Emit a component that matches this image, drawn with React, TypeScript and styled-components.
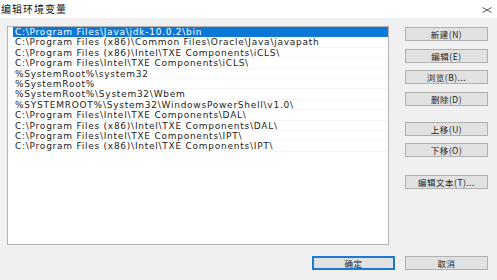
import React from 'react';
import styled, { createGlobalStyle } from 'styled-components';

const GlobalStyle = createGlobalStyle`
  html, body {
    margin: 0;
    padding: 0;
    background: #f0f0f0;
  }
`;

const Window = styled.div`
  width: 497px;
  height: 280px;
  display: flex;
  flex-direction: column;
  background: #f0f0f0;
  font-family: "Noto Sans CJK SC", "DejaVu Sans", sans-serif;
  overflow: hidden;
`;

const TitleBar = styled.div`
  height: 18px;
  background: #ffffff;
  display: flex;
  align-items: center;
  justify-content: space-between;
  padding: 0 5px 0 0;
  box-sizing: border-box;
`;

const Title = styled.span`
  font-size: 10px;
  color: #111;
  margin-left: 1px;
  margin-top: -2px;
  letter-spacing: 1px;
`;

const CloseIcon = styled.svg`
  width: 10px;
  height: 6px;
  margin-top: 1px;
`;

const Body = styled.div`
  display: flex;
  padding: 8px 0 0 7px;
`;

const ListBox = styled.div`
  width: 382px;
  height: 219px;
  box-sizing: border-box;
  border: 1px solid #b4b4b4;
  background: #ffffff;
  padding: 0 0 0 5px;
`;

const Row = styled.div<{ $selected?: boolean }>`
  height: 10.4px;
  line-height: 10.4px;
  padding-left: 2px;
  font-family: "DejaVu Sans", sans-serif;
  font-size: 9px;
  letter-spacing: 0.75px;
  white-space: nowrap;
  color: ${({ $selected }) => ($selected ? '#ffffff' : '#222')};
  background: ${({ $selected }) => ($selected ? '#0a78d6' : 'transparent')};
  box-shadow: inset 0 -1px 0 ${({ $selected }) => ($selected ? 'transparent' : '#f6f6f6')};
`;

const ButtonColumn = styled.div`
  display: flex;
  flex-direction: column;
  margin-left: 16px;
  padding-top: 1px;
`;

const SideButton = styled.div<{ $gap: number }>`
  width: 83px;
  height: 14px;
  margin-top: ${({ $gap }) => $gap}px;
  box-sizing: border-box;
  border: 1px solid #b0b0b0;
  background: #e1e1e1;
  display: flex;
  align-items: center;
  justify-content: center;
  font-size: 8.5px;
  color: #222;
  letter-spacing: 0.5px;
`;

const Footer = styled.div`
  display: flex;
  justify-content: flex-end;
  gap: 10px;
  padding: 11px 9px 0 0;
`;

const FooterButton = styled.div<{ $primary?: boolean }>`
  width: 83px;
  height: 14px;
  box-sizing: border-box;
  border: ${({ $primary }) => ($primary ? '2px solid #1a7ad4' : '1px solid #b0b0b0')};
  background: #e1e1e1;
  display: flex;
  align-items: center;
  justify-content: center;
  font-size: 8.5px;
  color: #222;
  letter-spacing: 0.5px;
`;

const paths = [
  'C:\\Program Files\\Java\\jdk-10.0.2\\bin',
  'C:\\Program Files (x86)\\Common Files\\Oracle\\Java\\javapath',
  'C:\\Program Files (x86)\\Intel\\TXE Components\\iCLS\\',
  'C:\\Program Files\\Intel\\TXE Components\\iCLS\\',
  '%SystemRoot%\\system32',
  '%SystemRoot%',
  '%SystemRoot%\\System32\\Wbem',
  '%SYSTEMROOT%\\System32\\WindowsPowerShell\\v1.0\\',
  'C:\\Program Files\\Intel\\TXE Components\\DAL\\',
  'C:\\Program Files (x86)\\Intel\\TXE Components\\DAL\\',
  'C:\\Program Files\\Intel\\TXE Components\\IPT\\',
  'C:\\Program Files (x86)\\Intel\\TXE Components\\IPT\\',
];

const sideButtons = [
  { label: '新建(N)', gap: 0 },
  { label: '编辑(E)', gap: 7.5 },
  { label: '浏览(B)...', gap: 7.5 },
  { label: '删除(D)', gap: 7.5 },
  { label: '上移(U)', gap: 16 },
  { label: '下移(O)', gap: 7.5 },
  { label: '编辑文本(T)...', gap: 18 },
];

const App: React.FC = () => {
  return (
    <>
      <GlobalStyle />
      <Window>
        <TitleBar>
          <Title>编辑环境变量</Title>
          <CloseIcon viewBox="0 0 10 6">
            <path d="M0.5 0.5 L9.5 5.5 M9.5 0.5 L0.5 5.5" stroke="#333" strokeWidth="0.8" fill="none" />
          </CloseIcon>
        </TitleBar>
        <Body>
          <ListBox>
            {paths.map((p, i) => (
              <Row key={p} $selected={i === 0}>
                {p}
              </Row>
            ))}
          </ListBox>
          <ButtonColumn>
            {sideButtons.map((b) => (
              <SideButton key={b.label} $gap={b.gap}>
                {b.label}
              </SideButton>
            ))}
          </ButtonColumn>
        </Body>
        <Footer>
          <FooterButton $primary>确定</FooterButton>
          <FooterButton>取消</FooterButton>
        </Footer>
      </Window>
    </>
  );
};

export default App;
